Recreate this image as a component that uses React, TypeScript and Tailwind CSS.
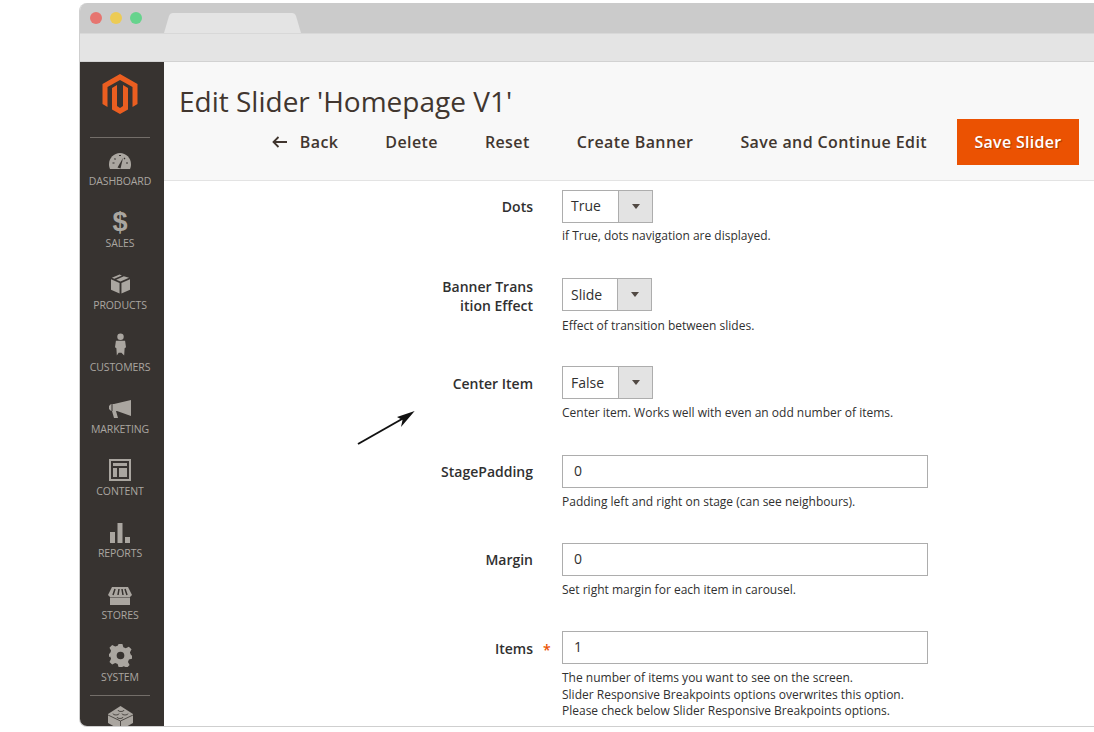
import type { ReactNode } from "react";

const navItems: { label: string; icon: ReactNode }[] = [
  {
    label: "DASHBOARD",
    icon: (
      <svg className="mb-px" width="22" height="16" viewBox="0 0 22 16">
        <path d="M1 16C0 14 0 12.500 0 11 0 5 5 0 11 0s11 5 11 11c0 1.500 0 3-1 5H1z" fill="currentColor" />
        <path d="M8.500 14.500L14 5l-2.500 10.500z" fill="#373330" />
        <path d="M3.500 10h2M5.500 5.500l1 1M10 2.500h2M17 10h2M16 5l-1 1" stroke="#373330" strokeWidth="1.200" />
      </svg>
    ),
  },
  {
    label: "SALES",
    icon: <span className="text-[27px] leading-[20px] font-bold font-['Liberation_Sans',sans-serif]">$</span>,
  },
  {
    label: "PRODUCTS",
    icon: (
      <svg width="19" height="20" viewBox="0 0 20 20">
        <path d="M0 5l9 4v11l-9-4zM20 5l-9 4v11l9-4z" fill="currentColor" />
        <path d="M1 3.400L9 0l2.500 1-8 3.600zM5.500 5.400l8-3.600L19 3.400 10 7.400z" fill="currentColor" />
      </svg>
    ),
  },
  {
    label: "CUSTOMERS",
    icon: (
      <svg width="11" height="23" viewBox="0 0 12 24">
        <circle cx="6" cy="3.500" r="3.500" fill="currentColor" />
        <path d="M1 8h10l1 7-1.500 1-.5 8-3-3h-3l-2 3-.5-8L0 15z" fill="currentColor" />
      </svg>
    ),
  },
  {
    label: "MARKETING",
    icon: (
      <svg width="22" height="18" viewBox="0 0 22 18">
        <path d="M22 0v16L8 11H7l2 7H5L3 11H2L0 9V6l2-2 3 0z" fill="currentColor" />
        <path d="M3 4v7" stroke="#373330" strokeWidth="1" />
      </svg>
    ),
  },
  {
    label: "CONTENT",
    icon: (
      <svg className="-mb-px" width="22" height="22" viewBox="0 0 22 22">
        <path fillRule="evenodd" d="M0 0h22v22H0zM2 2v18h18V2z" fill="currentColor" />
        <path d="M4 4h14v3H4zM4 9h4v9H4zM10 9h8v9h-8z" fill="currentColor" />
      </svg>
    ),
  },
  {
    label: "REPORTS",
    icon: (
      <svg className="-mb-px" width="20" height="20" viewBox="0 0 20 20">
        <path d="M0 9h5v11H0zM7.500 0h5v20h-5zM15 14h5v6h-5z" fill="currentColor" />
      </svg>
    ),
  },
  {
    label: "STORES",
    icon: (
      <svg className="-mb-px" width="24" height="18" viewBox="0 0 24 18">
        <path d="M4 0h16l4 8-2 2H2L0 8z" fill="currentColor" />
        <path d="M7 2L5 8M11 2l-1 6M14 2l1 6M17 2l2 6" stroke="#373330" strokeWidth="1.500" />
        <path d="M2 10.500h20V18H2z" fill="currentColor" />
      </svg>
    ),
  },
  {
    label: "SYSTEM",
    icon: (
      <svg className="-mb-px" width="23" height="23" viewBox="0 0 24 24">
        <path
          fillRule="evenodd"
          d="M10 0h4l1 3.500 2.500 1 3.200-1.700 2.800 2.800-1.700 3.200 1 2.500 1.200 1v3l-3.200 1-1 2.500 1.700 3.200-2.800 2.800-3.200-1.700-1.500.6L14 24h-4l-1-3.200-2.500-1-3.200 1.700-2.800-2.800 1.700-3.200-1-2.500L0 13.500v-3l1.200-1 1-2.500-1.700-3.200 2.800-2.800 3.200 1.700 2.500-1zM12 8a4 4 0 100 8 4 4 0 000-8z"
          fill="currentColor"
        />
      </svg>
    ),
  },
];

type FieldProps = {
  label: ReactNode;
  labelClass?: string;
  noteClass?: string;
  required?: boolean;
  control: ReactNode;
  notes: string[];
};

function Select({ value, width, textClass = "leading-[29px]" }: { value: string; width: string; textClass?: string }) {
  return (
    <div className={`flex h-[33px] border border-[#adadad] bg-white ${width}`}>
      <span className={`flex-1 pl-[8px] text-sm text-[#303030] ${textClass}`}>{value}</span>
      <span className="flex w-[34px] items-center justify-center border-l border-[#adadad] bg-[#e3e3e3]">
        <span className="h-0 w-0 border-x-[4px] border-t-[5px] border-x-transparent border-t-[#514943]" />
      </span>
    </div>
  );
}

function TextInput({ value }: { value: string }) {
  return (
    <div className="h-[33px] w-[366px] border border-[#adadad] bg-white pl-[11px] text-sm leading-[29px] text-[#303030]">
      {value}
    </div>
  );
}

function Field({ label, labelClass = "pt-[7px]", noteClass = "mt-[6px]", required, control, notes }: FieldProps) {
  return (
    <div className="flex h-[88px] items-start">
      <div className={`relative w-[369px] text-right text-sm leading-[19px] font-semibold text-[#303030] ${labelClass}`}>
        {label}
        {required && <span className="absolute top-[9px] left-[379px] text-[#eb5202]">*</span>}
      </div>
      <div className="ml-[29px]">
        {control}
        <div className={`text-xs leading-[16.5px] text-[#303030] ${noteClass}`}>
          {notes.map((n) => (
            <div key={n}>{n}</div>
          ))}
        </div>
      </div>
    </div>
  );
}

export default function App() {
  return (
    <div className="h-[732px] w-[1094px] overflow-hidden bg-white pt-[3px] pb-[5px] pl-[79px] font-['Open_Sans',sans-serif]">
      <div className="flex h-[724px] flex-col overflow-hidden rounded-tl-[8px] rounded-bl-[8px] border-b border-l border-[#cfcfcf]">
        {/* browser chrome */}
        <div className="flex h-[30px] shrink-0 items-center bg-[#cbcbcb]">
          <div className="ml-[10px] flex gap-[8px]">
            <span className="h-[12px] w-[12px] rounded-full bg-[#e67570]" />
            <span className="h-[12px] w-[12px] rounded-full bg-[#eccb55]" />
            <span className="h-[12px] w-[12px] rounded-full bg-[#66d38d]" />
          </div>
          <svg className="mt-[10px] ml-[22px]" width="137" height="20" viewBox="0 0 137 20">
            <path d="M0 20L5 3Q6 0 9 0H128Q131 0 132 3L137 20z" fill="#e4e4e4" />
          </svg>
        </div>
        <div className="h-[29px] shrink-0 border-y border-y-[#d2d2d2] border-t-[#d8d8d8] bg-[#e4e4e4]" />

        <div className="flex min-h-0 flex-1">
          {/* admin sidebar */}
          <aside className="flex w-[84px] shrink-0 flex-col items-center overflow-hidden bg-[#373330] pt-[12px] pr-[4px] text-[#aaa6a0]">
            <svg className="shrink-0" width="36" height="40" viewBox="0 0 36 40" fill="#eb5e20">
              <path d="M18 0L35.500 10V30L30.500 33V13L18 6 5.500 13V33L.5 30V10z" />
              <path d="M18 40L10 35.500V14L15 11V32L18 34 21 32V11L26 14V35.500z" />
            </svg>
            <div className="mt-[23px] mb-[10px] h-px w-[60px] shrink-0 bg-[#736e69]" />
            <nav className="flex w-full shrink-0 flex-col gap-[21px]">
              {navItems.map((item) => (
                <div key={item.label} className="flex h-[41px] flex-col items-center">
                  <div className="flex h-[22px] items-end">{item.icon}</div>
                  <div className="mt-[3px] text-[10.5px] leading-[16px] tracking-[-0.1px]">{item.label}</div>
                </div>
              ))}
            </nav>
            <div className="mt-[10px] mb-[10px] h-px w-[60px] shrink-0 bg-[#736e69]" />
            <svg className="shrink-0" width="25" height="24" viewBox="0 0 25 24" fill="currentColor">
              <path d="M0 8L12.500 0 25 8v9L12.500 24 0 17z" />
              <path d="M0 9l12.500 6L25 9M12.500 15v9M5 7.500a3 1.500 0 006 0M10 4a3 1.500 0 006 0M14 7.500a3 1.500 0 006 0M9 11a3 1.500 0 006 0" stroke="#373330" strokeWidth="0.8" fill="none" />
            </svg>
          </aside>

          <main className="relative min-w-0 flex-1 bg-white">
            {/* page header */}
            <header className="h-[119px] border-b border-[#e3e3e3] bg-[#f8f8f8] pt-[20px] pl-[15px]">
              <h1 className="text-[28px] leading-[38px] font-normal text-[#41362f]">Edit Slider 'Homepage V1'</h1>
              <div className="mt-[-1px] flex h-[46px] items-center justify-end pr-[15px] text-base font-semibold tracking-[0.4px] text-[#41362f]">
                <svg className="mr-[13px]" width="15" height="12" viewBox="0 0 15 12" fill="none" stroke="#41362f" strokeWidth="1.800">
                  <path d="M15 6H2M6.500 1L1.500 6l5 5" />
                </svg>
                <span>Back</span>
                <span className="ml-[47px]">Delete</span>
                <span className="ml-[47px]">Reset</span>
                <span className="ml-[47px]">Create Banner</span>
                <span className="ml-[47px]">Save and Continue Edit</span>
                <span className="ml-[30px] flex h-[46px] w-[122px] items-center justify-center bg-[#eb5202] tracking-[0.3px] text-white [text-shadow:1px_1px_1px_rgba(0,0,0,0.3)]">
                  Save Slider
                </span>
              </div>
            </header>

            {/* form rows */}
            <div className="pt-[9px]">
              <Field label="Dots" noteClass="mt-[5px]" control={<Select value="True" width="w-[91px]" />} notes={["if True, dots navigation are displayed."]} />
              <Field
                label={
                  <>
                    Banner Trans
                    <br />
                    ition Effect
                  </>
                }
                labelClass="-mt-px"
                noteClass="mt-[7px]"
                control={<Select value="Slide" width="w-[90px]" textClass="leading-[31px]" />}
                notes={["Effect of transition between slides."]}
              />
              <Field
                label="Center Item"
                labelClass="pt-[8px]"
                control={<Select value="False" width="w-[91px]" textClass="leading-[31px]" />}
                notes={["Center item. Works well with even an odd number of items."]}
              />
              <div className="h-px" />
              <Field label="StagePadding" control={<TextInput value="0" />} notes={["Padding left and right on stage (can see neighbours)."]} />
              <Field label="Margin" control={<TextInput value="0" />} notes={["Set right margin for each item in carousel."]} />
              <Field
                label="Items"
                labelClass="pt-[8px]"
                required
                control={<TextInput value="1" />}
                notes={[
                  "The number of items you want to see on the screen.",
                  "Slider Responsive Breakpoints options overwrites this option.",
                  "Please check below Slider Responsive Breakpoints options.",
                ]}
              />
            </div>

            {/* annotation arrow */}
            <svg className="absolute top-[347px] left-[193px]" width="60" height="36" viewBox="0 0 60 36" fill="#111">
              <path d="M1 35L45 10" stroke="#111" strokeWidth="2" />
              <path d="M57.700 2L40 8l5.500 3L44 18z" />
            </svg>
          </main>
        </div>
      </div>
    </div>
  );
}
